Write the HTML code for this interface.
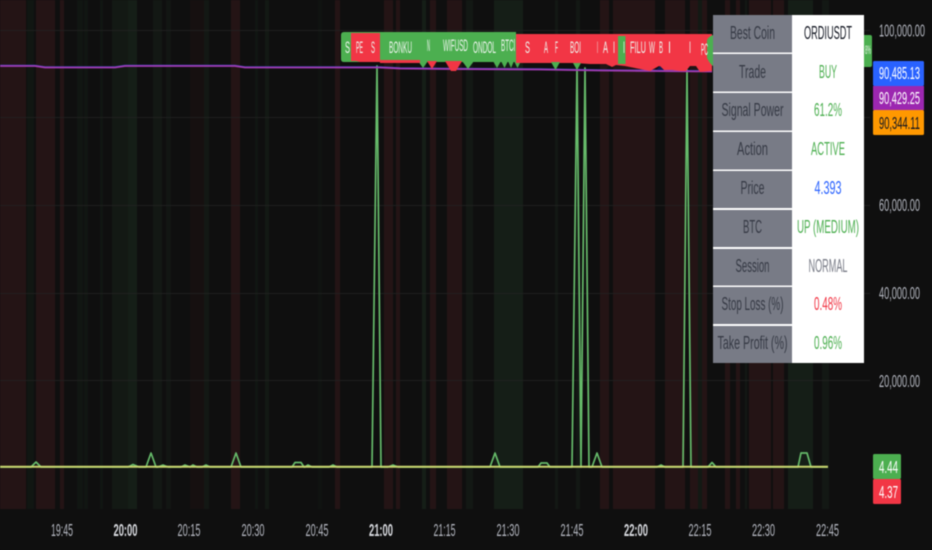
<!DOCTYPE html>
<html><head><meta charset="utf-8"><style>
html,body{margin:0;padding:0;background:#0f0f0f;width:932px;height:550px;overflow:hidden}
svg{display:block;filter:blur(.4px)}
text{font-family:"Liberation Sans",sans-serif}
</style></head><body>
<svg width="932" height="550" viewBox="0 0 932 550" xmlns="http://www.w3.org/2000/svg">
<rect width="932" height="550" fill="#0f0f0f"/>
<g id="bands">
<g fill="#241415">
<rect x="0" y="0" width="26" height="509"/><rect x="36" y="0" width="19" height="509"/><rect x="60" y="0" width="4" height="509"/>
<rect x="190" y="0" width="14" height="509" opacity=".35"/><rect x="231" y="0" width="9" height="509"/><rect x="335" y="0" width="5" height="509"/>
<rect x="384" y="0" width="9" height="509"/><rect x="396" y="0" width="4" height="509"/><rect x="430" y="0" width="6" height="509"/><rect x="447" y="0" width="15" height="509"/>
<rect x="600" y="0" width="9" height="509"/><rect x="613" y="0" width="42" height="509"/><rect x="665" y="0" width="20" height="509"/><rect x="690" y="0" width="8" height="509"/>
<rect x="702" y="0" width="5" height="509"/><rect x="725" y="0" width="5" height="509"/><rect x="736" y="0" width="4" height="509"/><rect x="749" y="0" width="22" height="509"/><rect x="773" y="0" width="11" height="509"/>
</g>
<g fill="#151e17">
<rect x="27" y="0" width="7" height="509" opacity=".45"/><rect x="77" y="0" width="6" height="509" opacity=".45"/><rect x="84" y="0" width="4" height="509" opacity=".45"/><rect x="100" y="0" width="3" height="509" opacity=".45"/>
<rect x="112" y="0" width="16" height="509" opacity=".7"/><rect x="128" y="0" width="9" height="509"/><rect x="153" y="0" width="9" height="509" opacity=".6"/><rect x="166" y="0" width="5" height="509" opacity=".5"/>
<rect x="204" y="0" width="5" height="509" opacity=".6"/><rect x="255" y="0" width="3" height="509" opacity=".45"/><rect x="265" y="0" width="4" height="509" opacity=".7"/><rect x="318" y="0" width="4" height="509" opacity=".35"/>
<rect x="422" y="0" width="4" height="509"/><rect x="466" y="0" width="7" height="509" opacity=".6"/><rect x="494" y="0" width="29" height="509"/><rect x="555" y="0" width="3" height="509" opacity=".6"/><rect x="576" y="0" width="4" height="509" opacity=".6"/>
<rect x="698" y="0" width="4" height="509" opacity=".7"/><rect x="745" y="0" width="2" height="509" opacity=".6"/><rect x="788" y="0" width="25" height="509"/><rect x="822" y="0" width="7" height="509" opacity=".6"/>
</g>
</g>
<g stroke="#222" stroke-width="1" opacity=".8">
<line x1="0" x2="870" y1="30.500" y2="30.500"/><line x1="0" x2="870" y1="117.500" y2="117.500"/><line x1="0" x2="870" y1="205.500" y2="205.500"/><line x1="0" x2="870" y1="293.500" y2="293.500"/><line x1="0" x2="870" y1="380.500" y2="380.500"/>
</g>
<polyline fill="none" stroke="#66bb6a" stroke-width="1.700" stroke-linejoin="round" points="0,467 31,467 36,462 41,467 128,467 133,464.500 139,467 146,467 151,453 156,467 158,467 163,465 168,467 181,467 185,465 190,467 193,465 197,467 202,467 206,465 210,467 231,467 236,453 241,467 292,467 295,462.500 301,462.500 304,467 305,467 308,465 312,467 329,467 333,465 337,467 372,467 377,66 381,467 388,467 393,465 398,467 490,467 495,453 500,467 538,467 541,463 547,463 550,467 572,467 577,68 581,467 585,68 589,467 592,467 597,453 602,467 657,467 661,465 665,467 683,467 687,70 691,467 708,467 712,462.500 716,467 798,467 801,453 807,453 811,467 828,467"/>
<line x1="0" x2="828" y1="466.800" y2="466.800" stroke="#c9d56f" stroke-width="2"/>
<polyline fill="none" stroke="#2962ff" stroke-width="1.500" points="0,65.500 35,65.500 45,67 115,67 125,65.500 235,65.500 245,67 380,67 400,68 450,68.500 540,69 600,70 712,71" opacity=".7"/>
<polyline fill="none" stroke="#a13bb3" stroke-width="1.800" points="0,66 35,66 45,67.500 115,67.500 125,66 235,66 245,67.500 380,67.500 400,68.500 450,69 540,69.500 600,70.500 712,71.500"/>
<g fill="#4caf50">
<path d="M344 32H516V62H344Q341 62 341 59V35Q341 32 344 32Z"/>
<path d="M418 61H428L423 68Z"/><path d="M462 61H474L468 69Z"/>
<path d="M493 61H501L497 68ZM501 61H508L504.500 68ZM508 61H514L511 68ZM514 61H521L517.500 68Z"/>
</g>
<g fill="#f23645">
<path d="M351 33H380V62H360L356 61H351Z"/><path d="M380 60H420V63H380Z"/>
<path d="M427 61H437L432 69Z"/><path d="M445 61H462L456 71H451Z"/>
<path d="M516 34H712V71L700 72L696 66H690L686 71L680 71L672 70H664L659 66L650 71L640 69L625 66L616 65L612 67L606 64H590L575 63H516Z"/>
</g>
<g fill="#4caf50">
<rect x="618" y="36" width="7.500" height="28"/><path d="M707 58V40Q708 37 713 35V66Q710 64 707 58Z"/>
<path d="M551 62H560L555.500 70Z"/><path d="M573 63H581L577 70Z"/>
<path d="M864 35H870Q872 35 872 37V65Q872 67 870 67H864Z"/>
</g>
<path d="M656 70L660 66L664 70Z" fill="#101a50"/><path d="M606 69L610 66L614 69Z" fill="#111"/>
<g fill="#eef5ee" font-size="16.500">
<text x="345" y="53" textLength="5" lengthAdjust="spacingAndGlyphs">S</text>
<text x="356" y="53" textLength="7" lengthAdjust="spacingAndGlyphs">PE</text>
<text x="371" y="53" textLength="4" lengthAdjust="spacingAndGlyphs">S</text>
<text x="389" y="53" textLength="23" lengthAdjust="spacingAndGlyphs">BONKU</text>
<text x="427" y="51" textLength="3" lengthAdjust="spacingAndGlyphs">N</text>
<text x="443" y="51" textLength="25" lengthAdjust="spacingAndGlyphs">WIFUSD</text>
<text x="473" y="53" textLength="23" lengthAdjust="spacingAndGlyphs">ONDOL</text>
<text x="501" y="51" textLength="14" lengthAdjust="spacingAndGlyphs">BTCl</text>
<text x="525" y="53" textLength="5" lengthAdjust="spacingAndGlyphs">S</text>
<text x="544" y="53" textLength="4" lengthAdjust="spacingAndGlyphs">A</text>
<text x="555" y="53" textLength="3" lengthAdjust="spacingAndGlyphs">F</text>
<text x="570" y="53" textLength="11" lengthAdjust="spacingAndGlyphs">BOI</text>
<text x="597" y="53" textLength="1" lengthAdjust="spacingAndGlyphs">I</text>
<text x="603" y="53" textLength="5" lengthAdjust="spacingAndGlyphs">A</text>
<text x="613" y="53" textLength="2" lengthAdjust="spacingAndGlyphs">I</text>
<text x="623" y="53" textLength="2" lengthAdjust="spacingAndGlyphs">I</text>
<text x="630" y="53" textLength="16" lengthAdjust="spacingAndGlyphs">FILU</text>
<text x="649" y="53" textLength="6" lengthAdjust="spacingAndGlyphs">W</text>
<text x="659" y="53" textLength="4" lengthAdjust="spacingAndGlyphs">B</text>
<text x="668" y="53" textLength="3" lengthAdjust="spacingAndGlyphs">I</text>
<text x="689" y="53" textLength="2" lengthAdjust="spacingAndGlyphs">I</text>
<text x="701" y="55" textLength="7" lengthAdjust="spacingAndGlyphs">PC</text>
<text x="865" y="54" textLength="6" font-size="12" lengthAdjust="spacingAndGlyphs">8%</text>
</g>
<rect x="713" y="15" width="151" height="348" fill="#fff"/>
<g fill="#787b86">
<rect x="713" y="15" width="79" height="37.500"/><rect x="713" y="54" width="79" height="37.500"/><rect x="713" y="93" width="79" height="37.500"/><rect x="713" y="132" width="79" height="37.500"/><rect x="713" y="171" width="79" height="37"/><rect x="713" y="210" width="79" height="37"/><rect x="713" y="249" width="79" height="36.500"/><rect x="713" y="287" width="79" height="37"/><rect x="713" y="326" width="79" height="37"/>
</g>
<g font-size="18" fill="#363a45" text-anchor="middle">
<text x="752.500" y="39" textLength="45" lengthAdjust="spacingAndGlyphs">Best Coin</text>
<text x="752.500" y="78" textLength="27" lengthAdjust="spacingAndGlyphs">Trade</text>
<text x="752.500" y="116" textLength="62" lengthAdjust="spacingAndGlyphs">Signal Power</text>
<text x="752.500" y="155" textLength="31" lengthAdjust="spacingAndGlyphs">Action</text>
<text x="752.500" y="194" textLength="24" lengthAdjust="spacingAndGlyphs">Price</text>
<text x="752.500" y="233" textLength="19" lengthAdjust="spacingAndGlyphs">BTC</text>
<text x="752.500" y="272" textLength="34" lengthAdjust="spacingAndGlyphs">Session</text>
<text x="752.500" y="310" textLength="62" lengthAdjust="spacingAndGlyphs">Stop Loss (%)</text>
<text x="752.500" y="349" textLength="70" lengthAdjust="spacingAndGlyphs">Take Profit (%)</text>
</g>
<g font-size="18" text-anchor="middle">
<text x="828" y="39" textLength="48" lengthAdjust="spacingAndGlyphs" fill="#131722">ORDIUSDT</text>
<text x="828" y="78" textLength="18" lengthAdjust="spacingAndGlyphs" fill="#4caf50">BUY</text>
<text x="828" y="116" textLength="28" lengthAdjust="spacingAndGlyphs" fill="#4caf50">61.2%</text>
<text x="828" y="155" textLength="34" lengthAdjust="spacingAndGlyphs" fill="#4caf50">ACTIVE</text>
<text x="828" y="194" textLength="27" lengthAdjust="spacingAndGlyphs" fill="#2962ff">4.393</text>
<text x="828" y="233" textLength="62" lengthAdjust="spacingAndGlyphs" fill="#4caf50">UP (MEDIUM)</text>
<text x="828" y="272" textLength="39" lengthAdjust="spacingAndGlyphs" fill="#787b86">NORMAL</text>
<text x="828" y="310" textLength="28" lengthAdjust="spacingAndGlyphs" fill="#f23645">0.48%</text>
<text x="828" y="349" textLength="28" lengthAdjust="spacingAndGlyphs" fill="#4caf50">0.96%</text>
</g>
<rect x="873" y="61" width="51" height="25" rx="1.500" fill="#2962ff"/>
<rect x="873" y="86" width="51" height="24" fill="#9c27b0"/>
<rect x="873" y="110" width="51" height="25" rx="1.500" fill="#ff9800"/>
<rect x="873" y="454" width="28" height="25" rx="1.500" fill="#4caf50"/>
<rect x="873" y="479" width="28" height="25" rx="1.500" fill="#f23645"/>
<g font-size="17.500" fill="#b2b5be">
<text x="879" y="36.500" textLength="46" lengthAdjust="spacingAndGlyphs">100,000.00</text>
<text x="879" y="211" textLength="41" lengthAdjust="spacingAndGlyphs">60,000.00</text>
<text x="879" y="299" textLength="41" lengthAdjust="spacingAndGlyphs">40,000.00</text>
<text x="879" y="387" textLength="41" lengthAdjust="spacingAndGlyphs">20,000.00</text>
<text x="879" y="79" textLength="41" lengthAdjust="spacingAndGlyphs" fill="#fff">90,485.13</text>
<text x="879" y="104" textLength="41" lengthAdjust="spacingAndGlyphs" fill="#fff">90,429.25</text>
<text x="879" y="129" textLength="41" lengthAdjust="spacingAndGlyphs" fill="#131722">90,344.11</text>
<text x="879" y="473" textLength="19" lengthAdjust="spacingAndGlyphs" fill="#fff">4.44</text>
<text x="879" y="498" textLength="19" lengthAdjust="spacingAndGlyphs" fill="#fff">4.37</text>
</g>
<g font-size="17.500" fill="#b2b5be" text-anchor="middle">
<text x="62" y="536" textLength="22" lengthAdjust="spacingAndGlyphs">19:45</text>
<text x="125.500" y="536" textLength="24" lengthAdjust="spacingAndGlyphs" font-weight="bold" fill="#d8dadf">20:00</text>
<text x="189" y="536" textLength="23" lengthAdjust="spacingAndGlyphs">20:15</text>
<text x="253" y="536" textLength="23" lengthAdjust="spacingAndGlyphs">20:30</text>
<text x="317" y="536" textLength="23" lengthAdjust="spacingAndGlyphs">20:45</text>
<text x="381" y="536" textLength="24" lengthAdjust="spacingAndGlyphs" font-weight="bold" fill="#d8dadf">21:00</text>
<text x="444.500" y="536" textLength="22" lengthAdjust="spacingAndGlyphs">21:15</text>
<text x="508" y="536" textLength="23" lengthAdjust="spacingAndGlyphs">21:30</text>
<text x="572" y="536" textLength="23" lengthAdjust="spacingAndGlyphs">21:45</text>
<text x="636" y="536" textLength="24" lengthAdjust="spacingAndGlyphs" font-weight="bold" fill="#d8dadf">22:00</text>
<text x="700" y="536" textLength="23" lengthAdjust="spacingAndGlyphs">22:15</text>
<text x="763.500" y="536" textLength="23" lengthAdjust="spacingAndGlyphs">22:30</text>
<text x="827.500" y="536" textLength="23" lengthAdjust="spacingAndGlyphs">22:45</text>
</g>
</svg>
</body></html>
